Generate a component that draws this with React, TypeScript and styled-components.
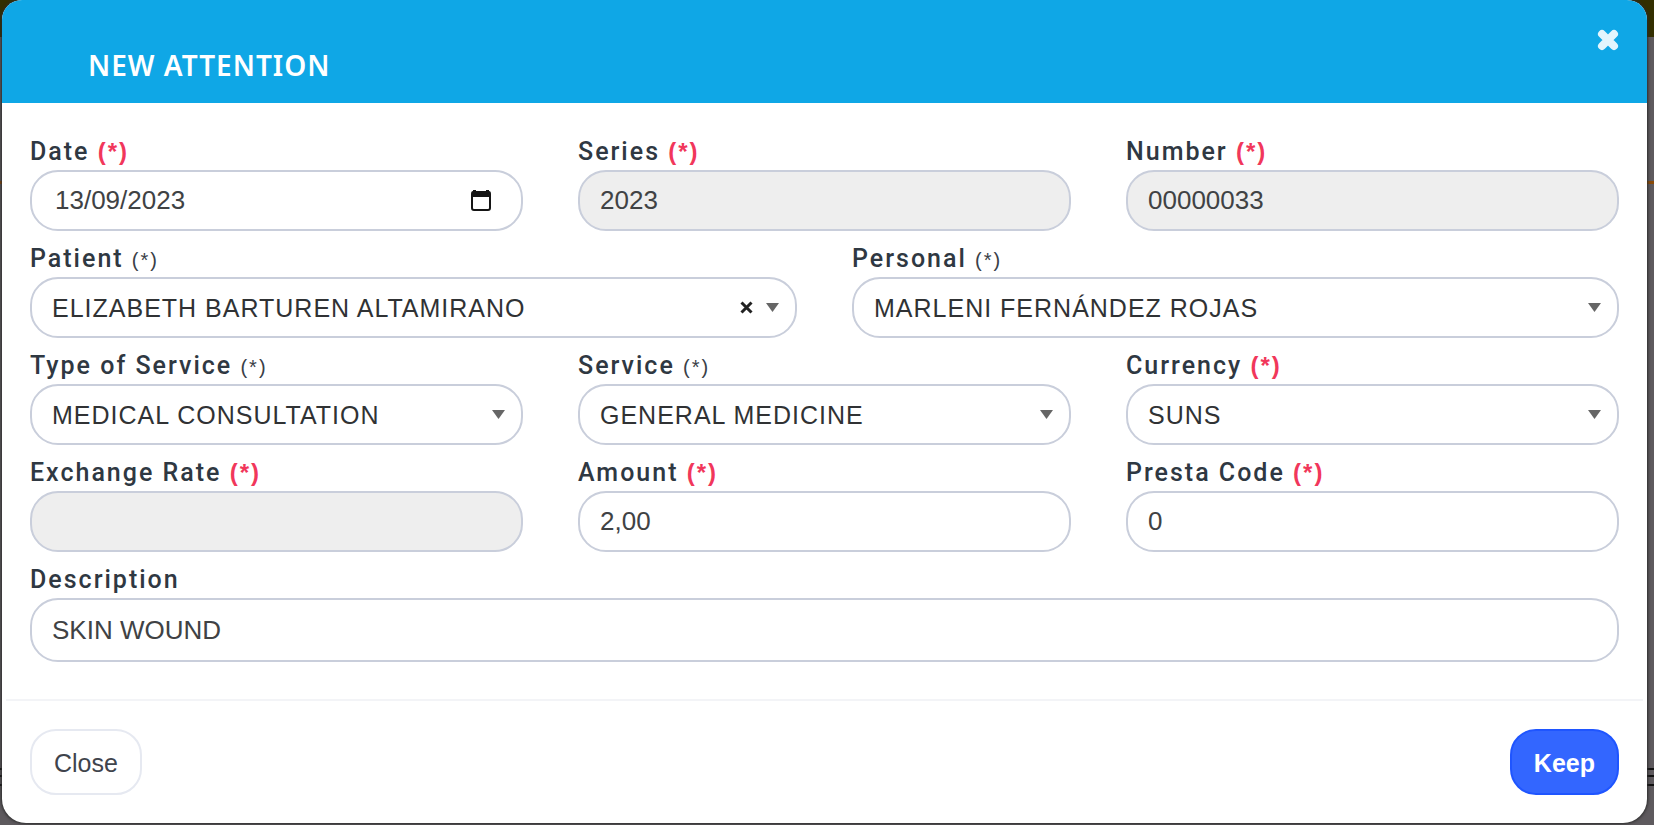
import React, { useState } from 'react';
import styled, { createGlobalStyle, css } from 'styled-components';

const sans = "'Liberation Sans', Arial, sans-serif";

const GlobalStyle = createGlobalStyle`
  * { box-sizing: border-box; }
  body { margin: 0; background: #5e5a5e; }
`;

const Backdrop = styled.div`
  min-height: 100vh;
  padding: 0 7px 2px 2px;
  background: linear-gradient(
    #332f00 0 37px,
    #5e5a5e 37px 181px,
    #8a4a08 181px 184px,
    #5e5a5e 184px 768px,
    #111 768px 770px,
    #5e5a5e 770px 775px,
    #111 775px 777px,
    #5e5a5e 777px 784px,
    #111 784px 786px,
    #5e5a5e 786px
  );
  font-family: ${sans};
`;

const Dialog = styled.section`
  border-radius: 20px 20px 24px 24px;
  background: #fff;
  box-shadow: 0 0 3px 1px #2b2b2b;
  overflow: hidden;
`;

const Header = styled.header`
  display: flex;
  justify-content: space-between;
  align-items: flex-start;
  height: 103px;
  padding: 28px 28px 0 86px;
  background: #0fa7e6;
`;

const Title = styled.h1`
  margin: 17px 0 0;
  color: #fff;
  font: 600 28px/40px 'Noto Sans', sans-serif;
  letter-spacing: 1px;
`;

const Dismiss = styled.button`
  display: flex;
  padding: 0;
  border: 0;
  background: none;
  color: #e3f5fd;
  cursor: pointer;
`;

const Form = styled.form`
  display: flex;
  flex-direction: column;
  padding: 21px 28px 37px;
`;

const Row = styled.div`
  display: flex;
  gap: 55px;
`;

const Field = styled.div`
  display: flex;
  flex: 1 1 0;
  flex-direction: column;
  min-width: 0;
`;

const Label = styled.label`
  height: 46px;
  padding-top: 13px;
  color: #2f3842;
  font: 500 25px/30px Roboto, ${sans};
  letter-spacing: 2px;
  white-space: nowrap;
`;

const Mark = styled.span<{ $required?: boolean }>`
  color: ${p => (p.$required ? '#f1375b' : '#3a4047')};
  font-family: ${sans};
  font-size: ${p => (p.$required ? 24 : 20)}px;
  font-weight: ${p => (p.$required ? 700 : 400)};
`;

const boxLook = css`
  width: 100%;
  height: 61px;
  border: 2px solid #c9cedb;
  border-radius: 28px;
  background: #fff;
  color: #404244;
  font: 400 26px/30px ${sans};
  outline: none;
`;

const TextBox = styled.input<{ $tall?: boolean }>`
  ${boxLook}
  padding: 0 20px;
  ${p => p.$tall && 'height: 64px;'}
  &:read-only { background: #eee; }
`;

const DateBox = styled(TextBox)`
  padding: 0 60px 0 23px;
`;

const SelectBox = styled.select`
  ${boxLook}
  appearance: none;
  padding: 0 56px 0 20px;
  color: #303234;
  font-size: 25px;
  letter-spacing: 1px;
`;

const Control = styled.div`
  position: relative;
  display: flex;
`;

const Adornments = styled.div`
  position: absolute;
  top: 0;
  right: 18px;
  bottom: 0;
  display: flex;
  align-items: center;
  gap: 13px;
  pointer-events: none;
`;

const IconButton = styled.button`
  display: flex;
  padding: 0;
  border: 0;
  background: none;
  pointer-events: auto;
`;

const CalendarSlot = styled(Adornments)`
  right: 31px;
`;

const Footer = styled.footer`
  display: flex;
  justify-content: space-between;
  margin: 0 4px;
  padding: 28px 24px;
  border-top: 2px solid #f3f4f7;
`;

const Button = styled.button<{ $primary?: boolean }>`
  height: 66px;
  padding: 2px 22px 0;
  border: 2px solid ${p => (p.$primary ? '#1f55ff' : '#e6e9f1')};
  border-radius: 26px;
  background: ${p => (p.$primary ? '#3366ff' : '#fff')};
  color: ${p => (p.$primary ? '#fff' : '#3f444c')};
  font: ${p => (p.$primary ? 700 : 400)} 25px/30px ${sans};
  cursor: pointer;
`;

type FieldProps = {
  id: string;
  label: string;
  mark?: 'red' | 'dark';
  value: string;
  readOnly?: boolean;
  tall?: boolean;
};

const FieldLabel = ({ id, label, mark }: Pick<FieldProps, 'id' | 'label' | 'mark'>) => (
  <Label htmlFor={id}>
    {label}
    {mark && <> <Mark $required={mark === 'red'}>(*)</Mark></>}
  </Label>
);

const Arrow = () => (
  <svg width="13" height="9" viewBox="0 0 13 9" aria-hidden="true">
    <path d="M0 0H13L6.500 9Z" fill="#666" />
  </svg>
);

function TextField({ id, label, mark, value, readOnly, tall }: FieldProps) {
  const [text, setText] = useState(value);
  return (
    <Field>
      <FieldLabel id={id} label={label} mark={mark} />
      <TextBox id={id} value={text} readOnly={readOnly} $tall={tall} onChange={e => setText(e.target.value)} />
    </Field>
  );
}

function DateField({ id, label, mark, value }: FieldProps) {
  const [text, setText] = useState(value);
  return (
    <Field>
      <FieldLabel id={id} label={label} mark={mark} />
      <Control>
        <DateBox id={id} value={text} onChange={e => setText(e.target.value)} />
        <CalendarSlot>
          <IconButton type="button" aria-label="Open calendar">
            <svg width="22" height="22" viewBox="0 0 22 22" aria-hidden="true">
              <path d="M3 0H6V1H16V0H19V1Q21 1 21 4V18Q21 21 18 21H4Q1 21 1 18V4Q1 1 3 1ZM3 7V18Q3 19 4 19H18Q19 19 19 18V7Z" fill="#151515" fillRule="evenodd" />
            </svg>
          </IconButton>
        </CalendarSlot>
      </Control>
    </Field>
  );
}

function SelectField({ id, label, mark, value, clearable }: FieldProps & { clearable?: boolean }) {
  return (
    <Field>
      <FieldLabel id={id} label={label} mark={mark} />
      <Control>
        <SelectBox id={id} defaultValue={value}>
          <option>{value}</option>
        </SelectBox>
        <Adornments>
          {clearable && (
            <IconButton type="button" aria-label="Clear patient">
              <svg width="13" height="13" viewBox="0 0 13 13" aria-hidden="true">
                <path d="M1.500 1.500L11.500 11.500M11.500 1.500L1.500 11.500" stroke="#222" strokeWidth="3" />
              </svg>
            </IconButton>
          )}
          <Arrow />
        </Adornments>
      </Control>
    </Field>
  );
}

export default function App() {
  return (
    <>
      <GlobalStyle />
      <Backdrop>
        <Dialog role="dialog" aria-labelledby="dialog-title">
          <Header>
            <Title id="dialog-title">NEW ATTENTION</Title>
            <Dismiss type="button" aria-label="Dismiss">
              <svg width="22" height="24" viewBox="0 0 22 24" aria-hidden="true">
                <path d="M5 6L17 18M17 6L5 18" stroke="currentColor" strokeWidth="8" strokeLinecap="round" />
              </svg>
            </Dismiss>
          </Header>
          <Form id="attention" onSubmit={e => e.preventDefault()}>
            <Row>
              <DateField id="date" label="Date" mark="red" value="13/09/2023" />
              <TextField id="series" label="Series" mark="red" value="2023" readOnly />
              <TextField id="number" label="Number" mark="red" value="00000033" readOnly />
            </Row>
            <Row>
              <SelectField id="patient" label="Patient" mark="dark" value="ELIZABETH BARTUREN ALTAMIRANO" clearable />
              <SelectField id="personal" label="Personal" mark="dark" value="MARLENI FERNÁNDEZ ROJAS" />
            </Row>
            <Row>
              <SelectField id="type" label="Type of Service" mark="dark" value="MEDICAL CONSULTATION" />
              <SelectField id="service" label="Service" mark="dark" value="GENERAL MEDICINE" />
              <SelectField id="currency" label="Currency" mark="red" value="SUNS" />
            </Row>
            <Row>
              <TextField id="rate" label="Exchange Rate" mark="red" value="" readOnly />
              <TextField id="amount" label="Amount" mark="red" value="2,00" />
              <TextField id="code" label="Presta Code" mark="red" value="0" />
            </Row>
            <Row>
              <TextField id="description" label="Description" value="SKIN WOUND" tall />
            </Row>
          </Form>
          <Footer>
            <Button type="button">Close</Button>
            <Button type="submit" form="attention" $primary>Keep</Button>
          </Footer>
        </Dialog>
      </Backdrop>
    </>
  );
}
